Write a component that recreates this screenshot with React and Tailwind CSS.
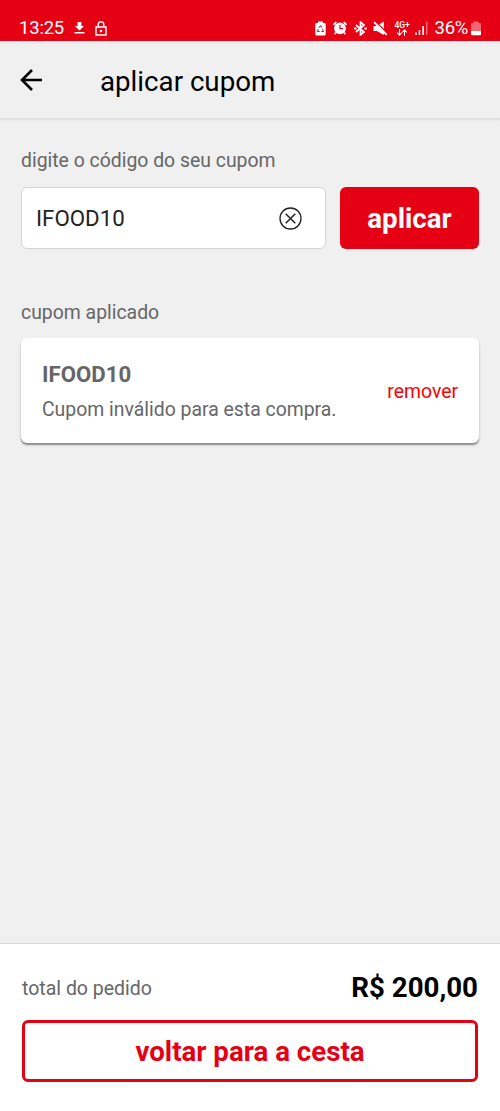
import React, { useState } from "react";

function StatusIcons() {
  return (
    <div className="flex items-center text-white">
      {/* battery saver */}
      <svg className="w-[11px] h-[15px] mr-[7px]" viewBox="0 0 11 15">
        <path d="M3 0.5h5V2h1.500a1.200 1.200 0 0 1 1.200 1.200v10a1.200 1.200 0 0 1-1.200 1.200h-8A1.200 1.200 0 0 1 .3 13.200v-10A1.200 1.200 0 0 1 1.500 2H3z" fill="currentColor" />
        <path d="M3.900 6.900 5.500 4.600l1.600 2.300M7.500 8l1 2.500H6.400M4.700 10.500H2.400l1-2.500" fill="none" stroke="#e60014" strokeWidth="1" />
      </svg>
      {/* alarm */}
      <svg className="w-[14px] h-[14px] mr-[7px]" viewBox="0 0 14 14">
        <circle cx="7" cy="7.300" r="5.900" fill="currentColor" />
        <path d="M.5 3.800 3.300 1M13.500 3.800 10.700 1M2.900 11.600l-1.300 1.500M11.100 11.600l1.300 1.500" stroke="currentColor" strokeWidth="1.700" fill="none" />
        <path d="M7 3.800v3.900h3" stroke="#e60014" strokeWidth="1.200" fill="none" />
      </svg>
      {/* bluetooth */}
      <svg className="w-[13px] h-[15px] mr-[6px]" viewBox="0 0 13 15" fill="none" stroke="currentColor" strokeWidth="1.700">
        <path d="m2 4 8 7-3.500 3V1L10 4l-8 7" />
        <path d="M.2 7.500h2.300M10.500 7.500h2.300" strokeWidth="1.900" />
      </svg>
      {/* muted */}
      <svg className="w-[15px] h-[15px] mr-[6px]" viewBox="0 0 15 15">
        <path d="M.5 5h3.300l7-4.400v13.400L3.800 10H.5z" fill="currentColor" />
        <path d="M2.300.2 14.800 12.700" stroke="#e60014" strokeWidth="1.300" />
        <path d="M1.100 1.200 13.800 13.900" stroke="currentColor" strokeWidth="1.900" />
      </svg>
      {/* mobile data */}
      <div className="w-[17px] mr-[4px] flex flex-col items-center">
        <span className="text-[8.500px] leading-[8px] font-medium">4G+</span>
        <svg className="w-[12px] h-[7px]" viewBox="0 0 12 7" fill="none" stroke="currentColor" strokeWidth="1.100">
          <path d="M3.500 0v6M1.200 3.700l2.300 2.500 2.300-2.500M8.500 7V1M6.200 3.300 8.500.8l2.300 2.500" />
        </svg>
      </div>
      {/* signal */}
      <svg className="w-[13px] h-[14px] mr-[7px]" viewBox="0 0 13 14" fill="currentColor">
        <path d="M.3 11.500h1.500V14H.3zM3.700 9h1.500v5H3.700zM7.300 5h1.600v9H7.300z" />
        <path d="M11 .5h1.500V14H11z" opacity=".4" />
      </svg>
      <span className="text-[18.500px] leading-[22px] tracking-[-0.300px]">36%</span>
      <svg className="w-[10px] h-[15px] ml-[3px]" viewBox="0 0 10 15" fill="currentColor">
        <path d="M2.500.5h5V2H9a1 1 0 0 1 1 1v7H0V3a1 1 0 0 1 1-1h1.500z" opacity=".4" />
        <path d="M0 10h10v3.300a1 1 0 0 1-1 1H1a1 1 0 0 1-1-1z" />
      </svg>
    </div>
  );
}

function StatusBar() {
  return (
    <div className="h-[41px] shrink-0 bg-[#e60014] pl-[19px] pr-[19px] pt-[15px] flex items-center justify-between text-white">
      <div className="flex items-center">
        <span className="text-[18.500px] leading-[22px] tracking-[-0.200px]">13:25</span>
        <svg className="w-[11px] h-[12px] ml-[10px]" viewBox="0 0 11 12" fill="currentColor">
          <path d="M3.600 0h3.800v4H10L5.500 8.500 1 4h2.600zM.5 10h10v1.500H.5z" />
        </svg>
        <svg className="w-[12px] h-[15px] ml-[10px]" viewBox="0 0 12 15" fill="none" stroke="currentColor" strokeWidth="1.400">
          <path d="M1 6h10v8H1zM3.200 6V3.500a2.800 2.800 0 0 1 5.600 0V6" />
          <circle cx="6" cy="10" r="1.300" fill="currentColor" stroke="none" />
        </svg>
      </div>
      <StatusIcons />
    </div>
  );
}

function Header() {
  return (
    <header className="h-[78px] shrink-0 flex items-center px-5 border-b border-[#dedede] shadow-[0_1px_2px_rgba(0,0,0,0.08)]">
      <button aria-label="voltar" className="w-[22px]">
        <svg className="w-[22px] h-[22px]" viewBox="0 0 22 22" fill="none" stroke="#000" strokeWidth="2.600">
          <path d="M22 11H2M12 1 2 11l10 10" />
        </svg>
      </button>
      <h1 className="ml-[58px] pt-[4px] text-[27.700px] leading-[34px] text-black">aplicar cupom</h1>
    </header>
  );
}

function App() {
  const [code, setCode] = useState("IFOOD10");

  return (
    <div className="w-full h-[1111px] flex flex-col bg-[#f0f0f0] font-['Roboto',sans-serif] text-[#666]">
      <StatusBar />
      <Header />

      <main className="flex-1 px-[21px] pt-[30px]">
        <label htmlFor="code" className="block text-[19.400px] leading-[24px]">
          digite o código do seu cupom
        </label>
        <div className="mt-[14px] flex gap-[14px]">
          <div className="w-[305px] h-[62px] flex items-center rounded-[6px] border border-[#d4d4d4] bg-white pl-[14px] pr-[23px]">
            <input
              id="code"
              value={code}
              onChange={(e) => setCode(e.target.value)}
              className="min-w-0 flex-1 text-[22.300px] leading-[26px] text-[#222] outline-none"
            />
            <button aria-label="limpar" onClick={() => setCode("")}>
              <svg className="w-[23px] h-[23px]" viewBox="0 0 23 23" fill="none" stroke="#222" strokeWidth="1.300">
                <circle cx="11.500" cy="11.500" r="10.500" />
                <path d="m6.700 6.700 9.600 9.600M16.300 6.700l-9.600 9.600" strokeWidth="1.500" />
              </svg>
            </button>
          </div>
          <button className="flex-1 h-[62px] pt-[2px] rounded-[6px] bg-[#e60014] text-[27.700px] font-bold text-white">
            aplicar
          </button>
        </div>

        <h2 className="mt-[52px] text-[19.400px] leading-[24px]">cupom aplicado</h2>
        <div className="mt-[13px] h-[105px] flex items-center justify-between rounded-[6px] bg-white px-[21px] shadow-[0_2px_1px_rgba(0,0,0,0.28),0_2px_3px_rgba(0,0,0,0.2)]">
          <div className="pt-[1px]">
            <p className="text-[22.200px] leading-[26px] font-bold">IFOOD10</p>
            <p className="mt-[11px] text-[19.400px] leading-[24px]">Cupom inválido para esta compra.</p>
          </div>
          <button className="pt-[3px] text-[19.400px] leading-[24px] text-[#ff0000]">remover</button>
        </div>
      </main>

      <footer className="h-[168px] shrink-0 border-t border-[#d8d8d8] bg-white px-[22px] pt-[27px]">
        <div className="flex items-center justify-between">
          <span className="pt-[2px] text-[19.500px] leading-[24px]">total do pedido</span>
          <span className="text-[27.700px] leading-[34px] font-bold text-black">R$ 200,00</span>
        </div>
        <button className="mt-[15px] w-full h-[62px] pt-[2px] rounded-[6px] border-[3px] border-[#e60014] text-[27.700px] font-bold text-[#e60014]">
          voltar para a cesta
        </button>
      </footer>
    </div>
  );
}

export default App;
